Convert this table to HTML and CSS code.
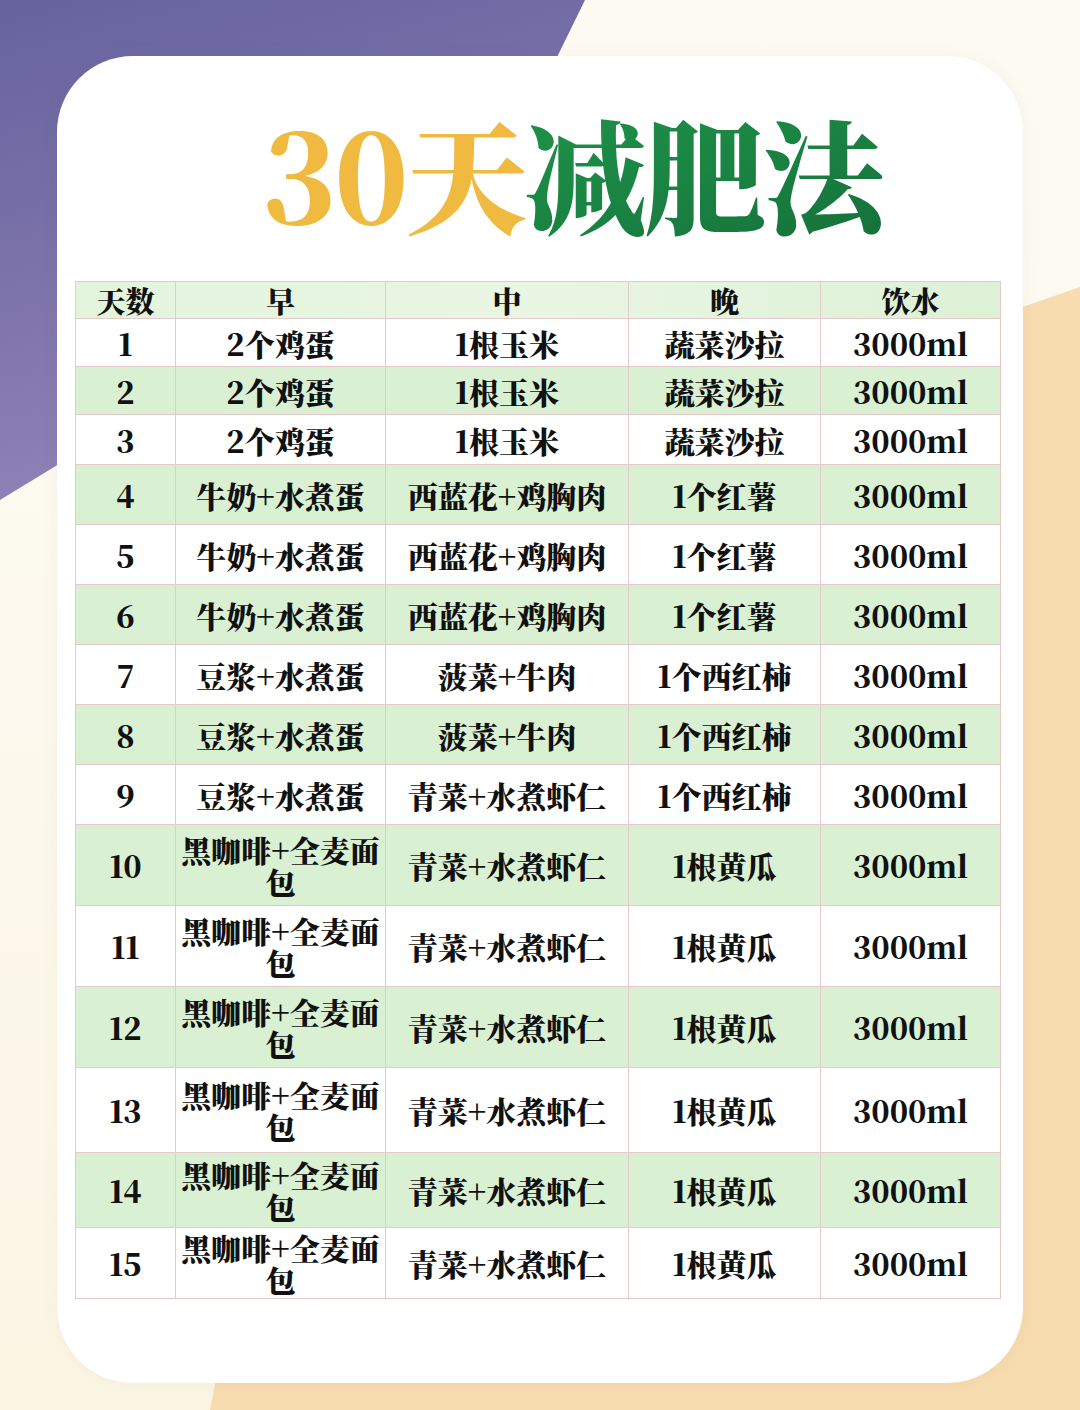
FILE: index.html
```html
<!DOCTYPE html>
<html lang="zh-CN">
<head>
<meta charset="utf-8">
<title>30天减肥法</title>
<link rel="stylesheet" href="styles.css">
</head>
<body>
<div class="page">
  <div class="bg-purple"></div>
  <div class="bg-peach"></div>
  <div class="card">
    <h1 class="title"><span class="gold">30天</span><span class="green">减肥法</span></h1>
    <table class="plan">
      <colgroup>
        <col class="c1"><col class="c2"><col class="c3"><col class="c4"><col class="c5">
      </colgroup>
      <thead>
        <tr class="head"><th>天数</th><th>早</th><th>中</th><th>晚</th><th>饮水</th></tr>
      </thead>
      <tbody>
        <tr class="h48"><td>1</td><td>2个鸡蛋</td><td>1根玉米</td><td>蔬菜沙拉</td><td>3000ml</td></tr>
        <tr class="h48 g"><td>2</td><td>2个鸡蛋</td><td>1根玉米</td><td>蔬菜沙拉</td><td>3000ml</td></tr>
        <tr class="h50"><td>3</td><td>2个鸡蛋</td><td>1根玉米</td><td>蔬菜沙拉</td><td>3000ml</td></tr>
        <tr class="h60 g"><td>4</td><td>牛奶+水煮蛋</td><td>西蓝花+鸡胸肉</td><td>1个红薯</td><td>3000ml</td></tr>
        <tr class="h60"><td>5</td><td>牛奶+水煮蛋</td><td>西蓝花+鸡胸肉</td><td>1个红薯</td><td>3000ml</td></tr>
        <tr class="h60 g"><td>6</td><td>牛奶+水煮蛋</td><td>西蓝花+鸡胸肉</td><td>1个红薯</td><td>3000ml</td></tr>
        <tr class="h60"><td>7</td><td>豆浆+水煮蛋</td><td>菠菜+牛肉</td><td>1个西红柿</td><td>3000ml</td></tr>
        <tr class="h60 g"><td>8</td><td>豆浆+水煮蛋</td><td>菠菜+牛肉</td><td>1个西红柿</td><td>3000ml</td></tr>
        <tr class="h60"><td>9</td><td>豆浆+水煮蛋</td><td>青菜+水煮虾仁</td><td>1个西红柿</td><td>3000ml</td></tr>
        <tr class="h81 g"><td>10</td><td class="wrap">黑咖啡+全麦面包</td><td>青菜+水煮虾仁</td><td>1根黄瓜</td><td>3000ml</td></tr>
        <tr class="h81"><td>11</td><td class="wrap">黑咖啡+全麦面包</td><td>青菜+水煮虾仁</td><td>1根黄瓜</td><td>3000ml</td></tr>
        <tr class="h81 g"><td>12</td><td class="wrap">黑咖啡+全麦面包</td><td>青菜+水煮虾仁</td><td>1根黄瓜</td><td>3000ml</td></tr>
        <tr class="h85"><td>13</td><td class="wrap">黑咖啡+全麦面包</td><td>青菜+水煮虾仁</td><td>1根黄瓜</td><td>3000ml</td></tr>
        <tr class="h75 g"><td>14</td><td class="wrap">黑咖啡+全麦面包</td><td>青菜+水煮虾仁</td><td>1根黄瓜</td><td>3000ml</td></tr>
        <tr class="h71"><td>15</td><td class="wrap">黑咖啡+全麦面包</td><td>青菜+水煮虾仁</td><td>1根黄瓜</td><td>3000ml</td></tr>
      </tbody>
    </table>
  </div>
</div>
</body>
</html>
```

FILE: styles.css
```css
* { box-sizing: border-box; }

html, body {
  margin: 0;
  padding: 0;
}

body {
  width: 1080px;
  height: 1410px;
  overflow: hidden;
  background: #fcf9ef;
  font-family: "Noto Serif CJK SC", "Source Han Serif SC", "Liberation Serif", "Noto Sans CJK SC", serif;
  color: #111;
}

.page {
  position: relative;
  width: 1080px;
  height: 1410px;
  padding-top: 56px;
  padding-left: 57px;
  background: linear-gradient(180deg, #fdfbf3 0%, #fcf8ec 60%, #fbf5e4 100%);
}

.bg-purple {
  position: absolute;
  left: 0;
  top: 0;
  width: 600px;
  height: 520px;
  background: linear-gradient(165deg, #66639f 0%, #7b72a9 40%, #9a8dbf 100%);
  clip-path: polygon(0 0, 585px 0, 485px 204px, 0 500px);
}

.bg-peach {
  position: absolute;
  left: 0;
  top: 0;
  width: 1080px;
  height: 1410px;
  background: #f7dcb0;
  clip-path: polygon(1080px 287px, 380px 530px, 210px 1410px, 1080px 1410px);
}

.card {
  position: relative;
  width: 966px;
  height: 1327px;
  background: #ffffff;
  border-radius: 76px;
  box-shadow: 0 0 18px rgba(120, 100, 60, 0.06);
  padding-left: 18px;
}

.title {
  margin: 0;
  height: 225px;
  padding-top: 55px;
  padding-left: 46px;
  text-align: center;
  font-size: 122px;
  line-height: 122px;
  font-weight: 900;
  letter-spacing: -3px;
  white-space: nowrap;
}

.gold { color: #f0b93f; }

.green {
  color: #1b8744;
  background: linear-gradient(160deg, #1f944a 0%, #1a8443 50%, #146e38 100%);
  -webkit-background-clip: text;
  background-clip: text;
  -webkit-text-fill-color: transparent;
}

.plan {
  width: 925px;
  border-collapse: collapse;
  table-layout: fixed;
  border: 1px solid #cdbfc4;
}

.c1 { width: 100px; }
.c2 { width: 210px; }
.c3 { width: 243px; }
.c4 { width: 192px; }
.c5 { width: 180px; }

.plan th,
.plan td {
  border: 1px solid #e6c9cb;
  padding: 0;
  text-align: center;
  vertical-align: middle;
  font-weight: 900;
  white-space: nowrap;
}

.plan th {
  font-size: 29px;
  line-height: 1;
}

.plan td {
  font-size: 30px;
  line-height: 32px;
}

.plan td.wrap {
  white-space: normal;
}

.head {
  height: 37px;
  background: linear-gradient(90deg, #e3f4dd 0%, #e9f6e4 50%, #ddf1d6 100%);
}

.g { background: #d9f0d3; }

.h48 { height: 48px; }
.h50 { height: 50px; }
.h60 { height: 60px; }
.h71 { height: 71px; }
.h75 { height: 75px; }
.h81 { height: 81px; }
.h85 { height: 85px; }
```
